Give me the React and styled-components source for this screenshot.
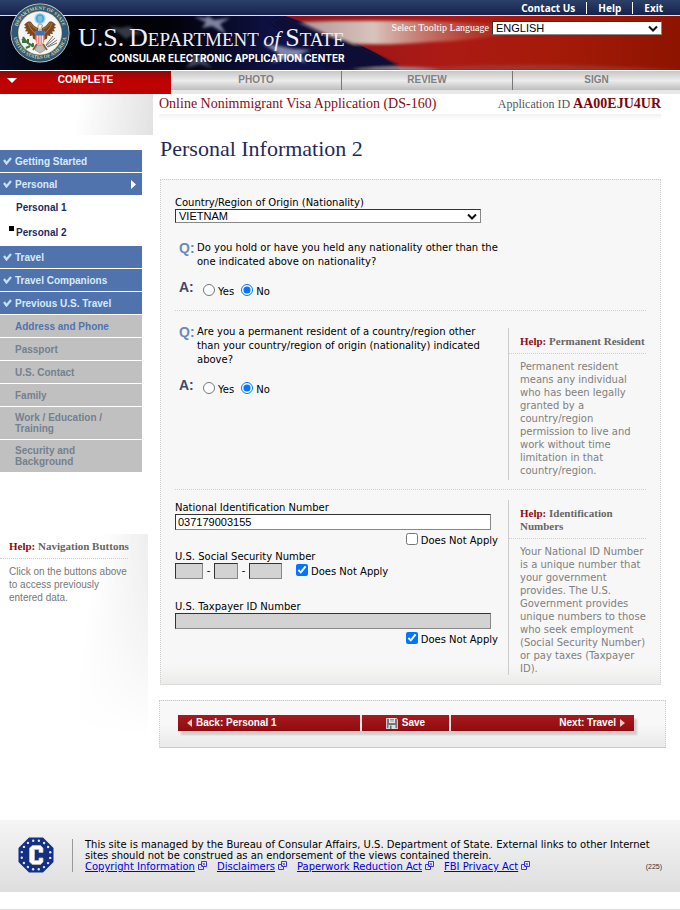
import { useState } from "react";
import styled, { createGlobalStyle } from "styled-components";

const steps = ["COMPLETE", "PHOTO", "REVIEW", "SIGN"];

const doneBefore = ["Getting Started"];
const doneAfter = ["Travel", "Travel Companions", "Previous U.S. Travel"];
const pending = [
  "Passport",
  "U.S. Contact",
  "Family",
  "Work / Education / Training",
  "Security and Background",
];

const footerLinks = [
  "Copyright Information",
  "Disclaimers",
  "Paperwork Reduction Act",
  "FBI Privacy Act",
];

export default function App() {
  return (
    <>
      <GlobalStyle />
      <Page>
        <Header />
        <Steps>
          {steps.map((step, i) => (
            <Step key={step} href="#" $active={i === 0}>
              {i === 0 && <DownArrow />}
              {step}
            </Step>
          ))}
        </Steps>
        <Body>
          <Sidebar />
          <Main>
            <TitleBar>
              <FormName>Online Nonimmigrant Visa Application (DS-160)</FormName>
              <AppId>
                Application ID <strong>AA00EJU4UR</strong>
              </AppId>
            </TitleBar>
            <h1>Personal Information 2</h1>
            <Form />
            <Actions>
              <ActionBar>
                <Action type="button" $align="flex-start">
                  <Arrow viewBox="0 0 5 8">
                    <path d="M5 0v8L0 4z" />
                  </Arrow>
                  Back: Personal 1
                </Action>
                <Action type="button" $align="center">
                  <FloppyIcon />
                  Save
                </Action>
                <Action type="button" $align="flex-end">
                  Next: Travel
                  <Arrow viewBox="0 0 5 8">
                    <path d="M0 0v8l5-4z" />
                  </Arrow>
                </Action>
              </ActionBar>
            </Actions>
          </Main>
        </Body>
        <Footer>
          <ConsularSeal />
          <FooterText>
            <p>
              This site is managed by the Bureau of Consular Affairs, U.S.
              Department of State. External links to other Internet sites should
              not be construed as an endorsement of the views contained therein.
            </p>
            <FooterLinks>
              {footerLinks.map((text) => (
                <a href="#" key={text}>
                  <span>{text}</span>
                  <ExternalIcon />
                </a>
              ))}
              <small>(225)</small>
            </FooterLinks>
          </FooterText>
        </Footer>
      </Page>
    </>
  );
}

function Header() {
  return (
    <Top>
      <TopLinks>
        <a href="#">Contact Us</a>
        <a href="#">Help</a>
        <a href="#">Exit</a>
      </TopLinks>
      <Banner>
        <Flag />
        <Brand>
          <Department>
            <b>U.S.</b> <b>D</b>EPARTMENT <i>of</i> <b>S</b>TATE
          </Department>
          <Center>CONSULAR ELECTRONIC APPLICATION CENTER</Center>
        </Brand>
        <Language>
          <label htmlFor="language">Select Tooltip Language</label>
          <Dropdown $width={170}>
            <select id="language" defaultValue="ENGLISH">
              <option>ENGLISH</option>
            </select>
            <Chevron />
          </Dropdown>
        </Language>
      </Banner>
      <StateSeal />
    </Top>
  );
}

function Sidebar() {
  return (
    <Side>
      <SideTop />
      <Nav>
        {doneBefore.map((item) => (
          <NavItem href="#" key={item} $done>
            <Check />
            {item}
          </NavItem>
        ))}
        <NavItem href="#" $done>
          <Check />
          Personal
          <Current viewBox="0 0 5 9">
            <path d="M0 0v9l5-4.500z" />
          </Current>
        </NavItem>
        <SubNav>
          <a href="#">Personal 1</a>
          <a href="#" aria-current="page">
            Personal 2
          </a>
        </SubNav>
        {doneAfter.map((item) => (
          <NavItem href="#" key={item} $done>
            <Check />
            {item}
          </NavItem>
        ))}
        <NavItem href="#" $next>
          Address and Phone
        </NavItem>
        {pending.map((item) => (
          <NavItem href="#" key={item}>
            {item}
          </NavItem>
        ))}
      </Nav>
      <SideHelp>
        <h2>
          <em>Help:</em> Navigation Buttons
        </h2>
        <p>Click on the buttons above to access previously entered data.</p>
      </SideHelp>
    </Side>
  );
}

function Form() {
  const [noNational, setNoNational] = useState(false);
  const [noSsn, setNoSsn] = useState(true);
  const [noTax, setNoTax] = useState(true);

  return (
    <Panel>
      <Section>
        <Origin>
          <label htmlFor="country">Country/Region of Origin (Nationality)</label>
          <Dropdown $width={306}>
            <select id="country" defaultValue="VIETNAM">
              <option>VIETNAM</option>
            </select>
            <Chevron />
          </Dropdown>
          <Question
            name="other"
            text="Do you hold or have you held any nationality other than the one indicated above on nationality?"
          />
        </Origin>
      </Section>
      <Section>
        <Resident>
          <Question
            name="resident"
            text="Are you a permanent resident of a country/region other than your country/region of origin (nationality) indicated above?"
          />
        </Resident>
        <Help $top={17}>
          <h2>
            <em>Help:</em> Permanent Resident
          </h2>
          <p>
            Permanent resident means any individual who has been legally granted
            by a country/region permission to live and work without time
            limitation in that country/region.
          </p>
        </Help>
      </Section>
      <Section>
        <Numbers>
          <Field>
            <label htmlFor="national">National Identification Number</label>
            <TextInput
              id="national"
              defaultValue="037179003155"
              disabled={noNational}
            />
            <NotApply value={noNational} onChange={setNoNational} />
          </Field>
          <Field>
            <label htmlFor="ssn1">U.S. Social Security Number</label>
            <Ssn>
              <TextInput id="ssn1" $size={28} disabled={noSsn} />
              <span>-</span>
              <TextInput aria-label="SSN part 2" $size={24} disabled={noSsn} />
              <span>-</span>
              <TextInput aria-label="SSN part 3" $size={33} disabled={noSsn} />
              <NotApply inline value={noSsn} onChange={setNoSsn} />
            </Ssn>
          </Field>
          <Field $gap={17}>
            <label htmlFor="tax">U.S. Taxpayer ID Number</label>
            <TextInput id="tax" disabled={noTax} />
            <NotApply value={noTax} onChange={setNoTax} />
          </Field>
        </Numbers>
        <Help $top={10}>
          <h2>
            <em>Help:</em> Identification Numbers
          </h2>
          <p>
            Your National ID Number is a unique number that your government
            provides. The U.S. Government provides unique numbers to those who
            seek employment (Social Security Number) or pay taxes (Taxpayer ID).
          </p>
        </Help>
      </Section>
    </Panel>
  );
}

function Question({ name, text }) {
  const [answer, setAnswer] = useState("No");
  return (
    <QuestionGrid>
      <Letter>Q:</Letter>
      <p id={name}>{text}</p>
      <Letter $dark>A:</Letter>
      <Options role="radiogroup" aria-labelledby={name}>
        {["Yes", "No"].map((option) => (
          <Choice key={option}>
            <input
              type="radio"
              name={name}
              checked={answer === option}
              onChange={() => setAnswer(option)}
            />
            <span>{option}</span>
          </Choice>
        ))}
      </Options>
    </QuestionGrid>
  );
}

function NotApply({ value, onChange, inline }) {
  return (
    <ApplyRow $inline={inline}>
      <Choice>
        <input
          type="checkbox"
          checked={value}
          onChange={(e) => onChange(e.target.checked)}
        />
        <span>Does Not Apply</span>
      </Choice>
    </ApplyRow>
  );
}

function Chevron() {
  return (
    <svg width="10" height="7" viewBox="0 0 10 7">
      <path d="M1 1.500l4 4 4-4" fill="none" stroke="#111" strokeWidth="2" />
    </svg>
  );
}

function DownArrow() {
  return (
    <svg width="10" height="5" viewBox="0 0 10 5">
      <path d="M0 0h10L5 5z" fill="#fff" />
    </svg>
  );
}

function Check() {
  return (
    <svg width="9" height="8" viewBox="0 0 9 8">
      <path
        d="M1 3l2.500 3.500L8 1"
        fill="none"
        stroke="#c3e0f5"
        strokeWidth="2.200"
      />
    </svg>
  );
}

function FloppyIcon() {
  return (
    <svg width="12" height="12" viewBox="0 0 12 12">
      <path d="M0 1h10.500L12 2.500V12H0z" fill="#c9c9c9" />
      <path d="M1 2h10v9H1z" fill="#777" />
      <path d="M3 1h6v5H3z" fill="#e4e4e4" />
      <path d="M2.500 8h7v4h-7z" fill="#ddd" />
      <path d="M4 8.500h1.500V12H4z" fill="#666" />
      <path d="M4 2.500h4M4 4h4" stroke="#999" />
    </svg>
  );
}

function ExternalIcon() {
  return (
    <svg width="9" height="9" viewBox="0 0 9 9" fill="none" stroke="#3b36d8">
      <path d="M3.500 3.500h-3v5h5v-3" />
      <path d="M3.500.5h5v5h-5z" />
      <path d="M2.500 6.500l4-4M4.500 2.500h2v2" stroke="#7a77ee" />
    </svg>
  );
}

function ConsularSeal() {
  const dots = Array.from({ length: 16 }, (_, i) => (i * Math.PI) / 8 + 0.2);
  return (
    <svg width="36" height="36" viewBox="0 0 36 36">
      <path
        d="M11 .5h14L35.500 11v14L25 35.500H11L.5 25V11z"
        fill="#132f86"
      />
      {dots.map((a) => (
        <circle
          key={a}
          cx={18 + 14.5 * Math.cos(a)}
          cy={18 + 14.5 * Math.sin(a)}
          r="1.200"
          fill="#dfe7f5"
        />
      ))}
      <path
        d="M25 15.500v-4.500L22.500 8.500h-8L11.500 11v14l3 2.500h8l2.500-2.500v-4h-4v2.500h-4.500v-11H21v3z"
        fill="#fff"
        stroke="#c9c3a8"
        strokeWidth=".8"
      />
    </svg>
  );
}

function StateSeal() {
  return (
    <Seal viewBox="0 0 60 60">
      <defs>
        <path id="ringTop" d="M7.500 37A23.500 23.500 0 1 1 52.500 37" />
        <path id="ringBottom" d="M3.500 34A27 27 0 0 0 56.500 34" />
      </defs>
      <circle cx="30" cy="30" r="29.500" fill="#e2dfbd" />
      <circle cx="30" cy="30" r="28.800" fill="#2f5878" />
      <circle cx="30" cy="30" r="22" fill="#d8c88c" />
      <circle cx="30" cy="30" r="21.300" fill="#f4f5f4" />
      <SealText>
        <textPath href="#ringTop" startOffset="50%" textAnchor="middle">
          DEPARTMENT OF STATE
        </textPath>
      </SealText>
      <SealText>
        <textPath href="#ringBottom" startOffset="50%" textAnchor="middle">
          UNITED STATES OF AMERICA
        </textPath>
      </SealText>
      <circle cx="30" cy="15.500" r="5.600" fill="#a4d4ee" />
      <circle cx="30" cy="15.500" r="4.200" fill="#4aa3d8" />
      <path d="M28 14h4M27.500 16h5M28.500 18h3" stroke="#d4ecf8" strokeWidth=".7" />
      {/* wings */}
      <path
        d="M28 25c-3-1-5-3-7-6-2-1-4 0-5 1l-2 2 2 1-2 2 2.500.8-1.500 2.400 3 .3-1 2.500 3-.2-.5 2.500 3-1 .5 3.500 5 2z"
        fill="#7b4823"
      />
      <path
        d="M32 25c3-1 5-3 7-6 2-1 4 0 5 1l2 2-2 1 2 2-2.500.8 1.500 2.400-3 .3 1 2.500-3-.2.5 2.500-3-1-.5 3.500-5 2z"
        fill="#7b4823"
      />
      <path
        d="M18 20c2 5 4 8 8 11M42 20c-2 5-4 8-8 11M20 20c2 3 4 5 7 6M40 20c-2 3-4 5-7 6"
        fill="none"
        stroke="#c08b45"
        strokeWidth=".8"
      />
      {/* head and shield */}
      <path d="M28 26v-3l1-2 3 .5 1 1.500-1.500.5.5 3z" fill="#f5efe0" stroke="#7b5b3c" strokeWidth=".5" />
      <path d="M25.500 28h9v9c0 3-2 4-4.500 5-2.500-1-4.500-2-4.500-5z" fill="#ef8a80" />
      <path d="M27.500 32v8M30 32v10M32.500 32v8" stroke="#fbe6e2" />
      <path d="M25.500 27.500h9v5h-9z" fill="#3e71b4" />
      <path d="M27 41l-4 6M33 41l4 6" stroke="#8a5b2c" strokeWidth="1.800" />
      {/* tail */}
      <path d="M27 42h6l2 5-5 3-5-3z" fill="#bcbcb8" stroke="#85827a" strokeWidth=".6" />
      {/* olive branch and arrows */}
      <path
        d="M24 43c-5-1-8-4-11-9m3 5l-4 0m6 2l0-5m2 7l-4 2m6-1l1-4m-8-1l-3-3"
        fill="none"
        stroke="#39743b"
        strokeWidth="2"
      />
      <path
        d="M36 43l9-8M37 44l10-7M36 42l7-9M38 44l9-4"
        stroke="#73746b"
        strokeWidth="1"
      />
    </Seal>
  );
}

function Flag() {
  return (
    <FlagSvg viewBox="0 0 680 54" preserveAspectRatio="none">
      <defs>
        <linearGradient id="night">
          <stop offset="0" stopColor="#060b22" />
          <stop offset=".12" stopColor="#000004" />
          <stop offset=".25" stopColor="#02020a" />
          <stop offset=".42" stopColor="#10134a" />
          <stop offset=".6" stopColor="#0d1138" />
        </linearGradient>
        <linearGradient id="red">
          <stop offset="0" stopColor="#8c1418" />
          <stop offset=".4" stopColor="#ad1a15" />
          <stop offset=".7" stopColor="#a41a08" />
          <stop offset="1" stopColor="#8d1400" />
        </linearGradient>
        <linearGradient id="white">
          <stop offset="0" stopColor="#b09496" />
          <stop offset=".3" stopColor="#d9c4bc" />
          <stop offset=".6" stopColor="#c06a5c" stopOpacity=".8" />
          <stop offset="1" stopColor="#a91b12" stopOpacity="0" />
        </linearGradient>
        <filter id="soft" x="-10%" y="-30%" width="120%" height="160%">
          <feGaussianBlur stdDeviation="1.500" />
        </filter>
      </defs>
      <rect width="680" height="54" fill="url(#night)" />
      <path d="M285 0h395v54H400Q375 30 285 0z" fill="url(#red)" />
      <g filter="url(#soft)">
        <path d="M300 6Q400 2 545 10Q490 24 430 26Q380 30 345 27z" fill="url(#white)" />
        <path d="M282 0Q318 18 345 24Q380 40 408 54H330L270 6z" fill="#0b0e34" />
        <path d="M395 54Q520 44 680 54z" fill="#9a5050" opacity=".5" />
        <path d="M350 54Q410 48 440 54z" fill="#a59a9e" />
      </g>
      <g filter="url(#soft)" fill="#9ba0bd">
        <path d="M208 0l6 4 16-2-10 6 6 10-14-8-10 2 4-6-12-5 12 1z" opacity=".8" />
        <path d="M263 28l16 2 14 3 18 1-11 4 6 9-16-6-18 6 7-9z" opacity=".8" />
        <path d="M108 10l12 2 10-2 4 4 10 4-12 1-6 4-6-5z" opacity=".35" />
        <path d="M190 38l9 3 14-1-9 4 8 8-12-4-14 4 5-7z" opacity=".4" />
      </g>
    </FlagSvg>
  );
}

const GlobalStyle = createGlobalStyle`
  * {
    box-sizing: border-box;
  }
  body {
    margin: 0;
    background: #fff;
    font-family: "DejaVu Sans", Verdana, sans-serif;
    font-size: 10px;
    line-height: 12px;
    color: #000;
  }
  h1, h2, p {
    margin: 0;
    font-weight: 400;
  }
  input, select, button {
    margin: 0;
    font-family: "Liberation Sans", Arial, sans-serif;
  }
  svg {
    flex: none;
  }
`;

const Page = styled.div`
  padding-bottom: 17px;
  border-bottom: 1px solid #dcdcdc;
`;

const Top = styled.header`
  position: relative;
`;

const TopLinks = styled.nav`
  display: flex;
  justify-content: flex-end;
  align-items: center;
  height: 16px;
  padding-right: 6px;
  background: linear-gradient(#2b4068, #15234d);
  border-bottom: 1px solid #dfe3ee;

  a {
    padding: 0 11px;
    border-left: 1px solid #fff;
    font-family: "Noto Sans", sans-serif;
    font-weight: 700;
    font-size: 10px;
    line-height: 12px;
    color: #fff;
    text-decoration: none;
  }
  a:first-child {
    border-left: 0;
  }
`;

const Banner = styled.div`
  position: relative;
  display: flex;
  justify-content: space-between;
  height: 54px;
`;

const FlagSvg = styled.svg`
  position: absolute;
  inset: 0;
  width: 100%;
  height: 100%;
`;

const Seal = styled.svg`
  position: absolute;
  left: 10px;
  top: 3px;
  width: 60px;
  height: 60px;
`;

const SealText = styled.text`
  font-family: "Liberation Serif", serif;
  font-weight: 700;
  font-size: 5px;
  fill: #d9d39c;
`;

const Brand = styled.div`
  position: relative;
  padding: 10px 0 0 78px;
  color: #fff;
  text-align: right;
`;

const Department = styled.div`
  font-family: "Liberation Serif", serif;
  font-size: 19px;
  line-height: 24px;
  color: #eef0f5;
  white-space: nowrap;

  b {
    font-weight: 400;
    font-size: 26px;
  }
  i {
    font-size: 22px;
  }
`;

const Center = styled.div`
  font-family: Inter, "Liberation Sans", sans-serif;
  font-weight: 700;
  font-size: 10px;
  line-height: 12px;
`;

const Language = styled.div`
  position: relative;
  display: flex;
  align-items: center;
  gap: 3px;
  height: 24px;
  padding-right: 18px;
  font-family: "Liberation Serif", serif;
  color: #fff;
`;

const Dropdown = styled.div`
  position: relative;
  display: flex;
  width: ${(p) => p.$width}px;

  select {
    appearance: none;
    width: 100%;
    height: 14px;
    padding: 0 3px;
    border: 1px solid;
    border-color: #333 #888 #888 #333;
    border-radius: 0;
    background: #fff;
    font-size: 11px;
    line-height: 12px;
    color: #000;
  }
  svg {
    position: absolute;
    right: 4px;
    top: 4px;
    pointer-events: none;
  }
`;

const Steps = styled.nav`
  display: grid;
  grid-template-columns: 171fr 171fr 171fr 167fr;
  height: 24px;
  border-top: 1px solid #fff;
  background: linear-gradient(#d9d9d9, #e9e9e9);
`;

const Step = styled.a`
  position: relative;
  display: flex;
  justify-content: center;
  align-items: center;
  height: ${(p) => (p.$active ? 23 : 19)}px;
  padding-bottom: ${(p) => (p.$active ? 5 : 1)}px;
  border-right: ${(p) => (p.$active ? 0 : 1)}px solid #777;
  background: ${(p) =>
    p.$active
      ? "linear-gradient(#8c0a0a, #c00000 40%, #b80505)"
      : "linear-gradient(#c6c6c6, #ececec 50%, #bdbdbd)"};
  font-family: "Liberation Sans", Arial, sans-serif;
  font-weight: 700;
  font-size: 10px;
  color: ${(p) => (p.$active ? "#fff" : "#808080")};
  text-decoration: none;

  &:last-child {
    border-right: 0;
  }
  svg {
    position: absolute;
    left: 7px;
    top: 7px;
  }
`;

const Body = styled.div`
  display: grid;
  grid-template-columns: 153px 1fr;
`;

const Side = styled.aside`
  font-family: "Liberation Sans", Arial, sans-serif;
`;

const SideTop = styled.div`
  height: 41px;
  background: linear-gradient(100deg, #fff 50%, #e2e2e2);
`;

const Nav = styled.nav`
  display: grid;
  gap: 1px;
  width: 142px;
  margin-top: 15px;
`;

const NavItem = styled.a`
  display: flex;
  align-items: center;
  gap: 3px;
  min-height: 22px;
  padding: 5px 8px 5px ${(p) => (p.$done ? 3 : 15)}px;
  padding-right: ${(p) => (p.$done ? 6 : 30)}px;
  background: ${(p) => (p.$done ? "#5073ae" : "#c0c0c0")};
  font-weight: 700;
  font-size: 10px;
  line-height: 11px;
  color: ${(p) => (p.$done ? "#d5eaf8" : p.$next ? "#5073ae" : "#74818e")};
  text-decoration: none;
`;

const Current = styled.svg`
  width: 5px;
  height: 9px;
  margin-left: auto;
  fill: #fff;
`;

const SubNav = styled.div`
  display: grid;
  margin-top: -1px;

  a {
    display: flex;
    align-items: center;
    height: 25px;
    padding-left: 16px;
    font-weight: 700;
    color: #1c2b60;
    text-decoration: none;
  }
  a[aria-current]::before {
    content: "";
    width: 5px;
    height: 5px;
    margin: 0 2px 8px -7px;
    background: #000;
  }
`;

const SideHelp = styled.section`
  width: 148px;
  min-height: 200px;
  margin-top: 62px;
  background:
    linear-gradient(transparent, #fff),
    linear-gradient(100deg, #fff 55%, #e2e2e2);

  h2 {
    padding: 6px 9px 5px;
    margin-right: 20px;
    border-bottom: 1px dotted #ccc;
    font-family: "Liberation Serif", serif;
    font-weight: 700;
    font-size: 11px;
    line-height: 13px;
    color: #666;
    white-space: nowrap;
  }
  em {
    font-style: normal;
    color: #8f0a10;
  }
  p {
    padding: 6px 15px 0 9px;
    line-height: 13px;
    color: #777;
  }
`;

const Main = styled.main`
  min-width: 0;
  padding: 0 14px 0 6px;

  h1 {
    margin: 16px 1px 17px;
    font-family: "Liberation Serif", serif;
    font-size: 22px;
    line-height: 26px;
    color: #1f2a5c;
  }
`;

const TitleBar = styled.div`
  display: flex;
  justify-content: space-between;
  height: 26px;
  margin-right: 5px;
  background: linear-gradient(#f2f2f2, #fff) bottom / 100% 6px no-repeat;
  font-family: "Liberation Serif", serif;
  line-height: 20px;
`;

const FormName = styled.div`
  font-size: 14px;
  color: #8f0a10;
`;

const AppId = styled.div`
  font-size: 12px;
  color: #555;

  strong {
    font-size: 14px;
    color: #7d0409;
  }
`;

const Panel = styled.form`
  margin: 0 5px 0 1px;
  padding: 0 14px;
  border: 1px dotted #ccc;
  border-bottom: 1px solid #ddd;
  background: linear-gradient(#f7f7f7 96%, #ececea);
`;

const Section = styled.section`
  display: grid;
  grid-template-columns: 1fr 138px;
  padding-bottom: 9px;
  border-bottom: 1px dotted #ccc;

  &:last-child {
    border-bottom: 0;
  }
`;

const Origin = styled.div`
  padding-top: 17px;

  label {
    display: block;
  }
`;

const Resident = styled.div`
  /* the question block brings its own 18px */
  margin-top: -4px;
`;

const QuestionGrid = styled.div`
  display: grid;
  grid-template-columns: 18px 1fr;
  row-gap: 11px;
  margin-top: 18px;
  padding: 0 10px 3px 4px;

  p {
    line-height: 14px;
  }
  label {
    display: flex;
  }
`;

const Letter = styled.span`
  font-family: "Liberation Sans", Arial, sans-serif;
  font-weight: 700;
  font-size: 14px;
  line-height: 14px;
  color: ${(p) => (p.$dark ? "#3f4a63" : "#6c8ab8")};
`;

const Options = styled.div`
  display: flex;
  gap: 7px;
  padding: 4px 0 0 6px;
`;

const Choice = styled.label`
  display: flex;
  gap: 3px;

  input {
    width: 12px;
    height: 12px;
  }
  span {
    padding-top: 2px;
  }
`;

const Help = styled.aside`
  min-height: 152px;
  margin-top: ${(p) => p.$top}px;
  border-left: 1px solid #ccc;

  h2 {
    padding: 7px 0 5px 11px;
    border-bottom: 1px dotted #ccc;
    font-family: "Liberation Serif", serif;
    font-weight: 700;
    font-size: 11px;
    line-height: 13px;
    color: #666;
  }
  em {
    font-style: normal;
    color: #8f0a10;
  }
  p {
    padding: 6px 0 0 11px;
    line-height: 13px;
    color: #808080;
  }
`;

const Numbers = styled.div`
  padding-top: 12px;
`;

const Field = styled.div`
  display: flex;
  flex-direction: column;
  margin-top: ${(p) => p.$gap || 0}px;
`;

const TextInput = styled.input`
  width: ${(p) => p.$size || 316}px;
  height: 16px;
  padding: 0 2px;
  border: 1px solid;
  border-color: #333 #888 #888 #333;
  border-radius: 0;
  background: #fff;
  font-size: 11px;
  color: #000;

  &:disabled {
    background: #d3d3d3;
  }
`;

const ApplyRow = styled.div`
  display: flex;
  justify-content: flex-end;
  width: ${(p) => (p.$inline ? "auto" : "323px")};
  padding: ${(p) => (p.$inline ? "1px 0 0 14px" : "3px 0 4px")};
`;

const Ssn = styled.div`
  display: flex;
  height: 21px;

  > span {
    width: 11px;
    padding-top: 2px;
    text-align: center;
  }
`;

const Actions = styled.div`
  margin-top: 15px;
  padding: 14px 31px 16px 18px;
  border: 1px dotted #ccc;
  border-bottom-style: solid;
  background: linear-gradient(#f8f8f8 50%, #e9e9e9);
`;

const ActionBar = styled.div`
  display: grid;
  grid-template-columns: 183fr 87fr 184fr;
  gap: 2px;
  background: #f0e4e4;
  box-shadow: 3px 4px 2px #ccc;
`;

const Action = styled.button`
  display: flex;
  justify-content: ${(p) => p.$align};
  align-items: center;
  gap: 4px;
  height: 16px;
  padding: 0 9px;
  border: 0;
  background: linear-gradient(#a8191e, #8e0c10);
  font-weight: 700;
  font-size: 10px;
  line-height: 12px;
  color: #fff;
`;

const Arrow = styled.svg`
  width: 5px;
  height: 8px;
  fill: #ecc9c4;
`;

const Footer = styled.footer`
  display: flex;
  align-items: flex-start;
  gap: 18px;
  min-height: 72px;
  margin-top: 72px;
  padding: 17px 18px;
  background: linear-gradient(#f5f5f5, #dedede);
`;

const FooterText = styled.div`
  flex: 1;
  margin-top: 2px;
  padding-left: 12px;
  border-left: 1px solid #999;
  line-height: 11px;
`;

const FooterLinks = styled.div`
  display: flex;
  gap: 10px;

  a {
    display: flex;
    gap: 3px;
    color: #0000e0;
    text-decoration: none;
  }
  a span {
    text-decoration: underline;
  }
  small {
    margin-left: auto;
    font-family: "Liberation Sans", Arial, sans-serif;
    font-size: 7px;
    color: #333;
  }
`;
